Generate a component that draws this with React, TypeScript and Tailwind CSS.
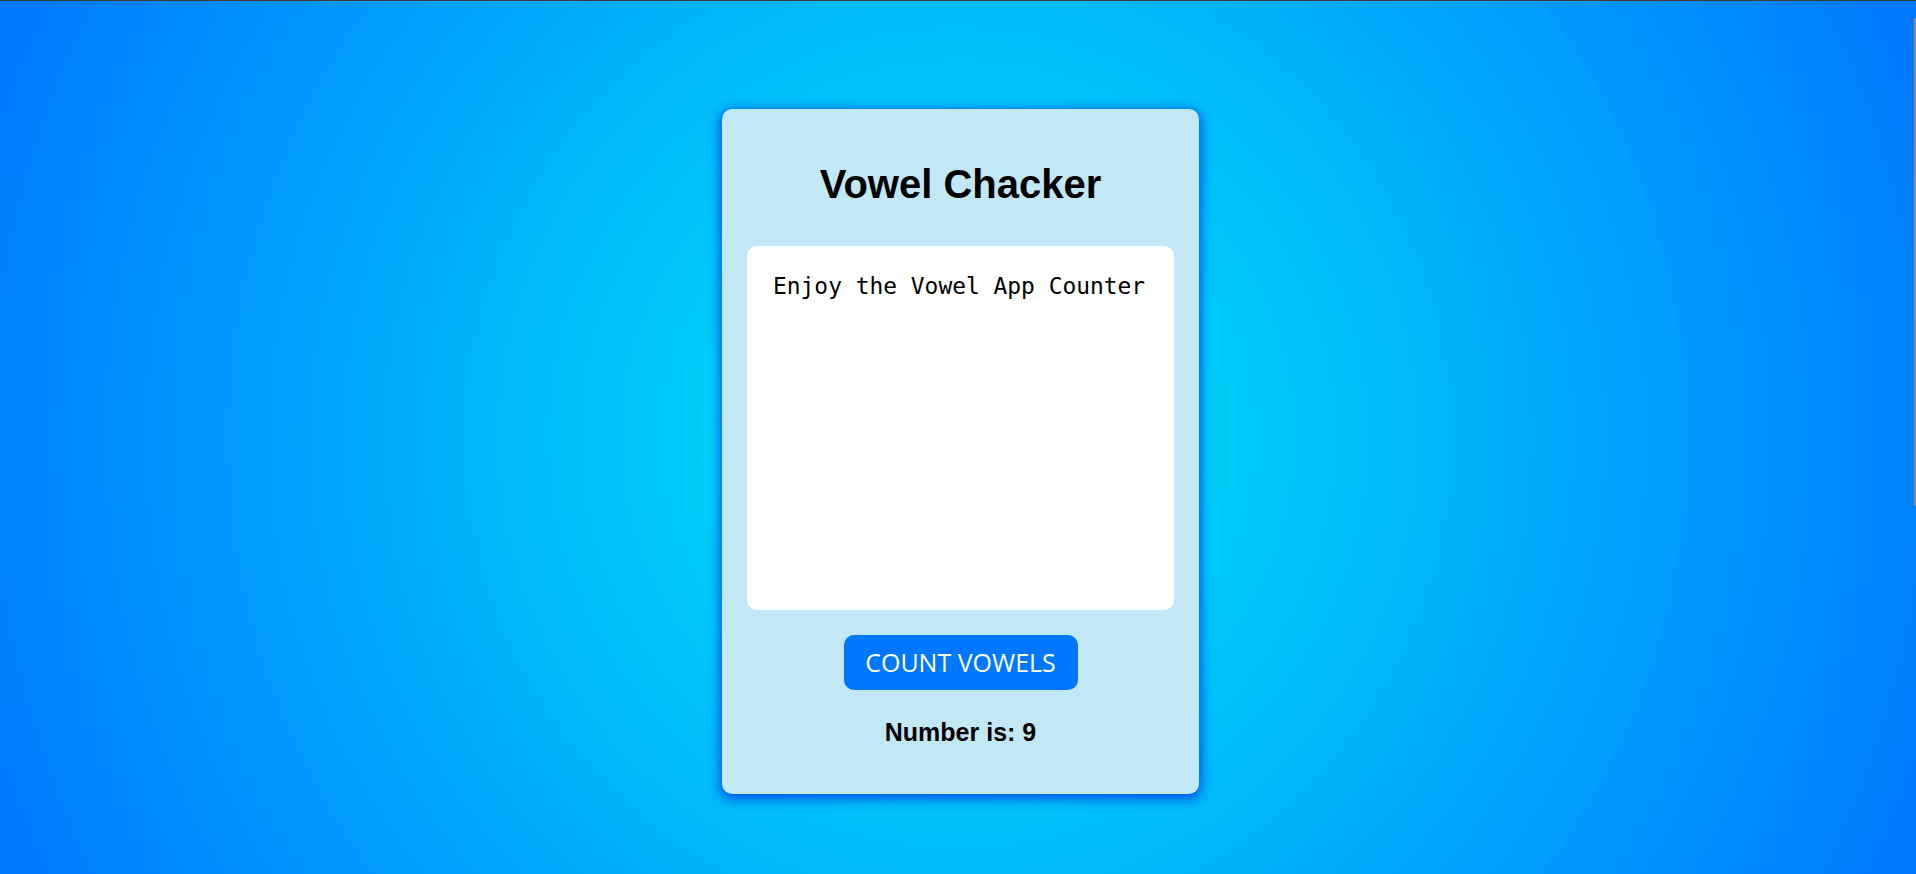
import { useState } from 'react'

const VOWELS = 'aeiouAEIOU'

function countVowels(text: string): number {
  let n = 0
  for (const ch of text) if (VOWELS.includes(ch)) n++
  return n
}

export default function App() {
  const [text, setText] = useState('Enjoy the Vowel App Counter')
  const [count, setCount] = useState(9)

  return (
    <div className="relative min-h-[874px] border-t border-[#3c3c3c] bg-[image:radial-gradient(circle,#00eaf6,#0077ff)] pl-[5px] pt-[108px]">
      <div className="mx-auto flex w-[477px] flex-col items-center rounded-[10px] bg-[#c2e7f5] px-[25px] pt-[52px] pb-[48px] shadow-[0_3px_12px_2px_rgba(0,70,230,0.9)]">
        <h1 className="font-['Liberation_Sans',Arial,sans-serif] text-[40px] leading-[46px] font-bold text-black">
          Vowel Chacker
        </h1>

        <textarea
          className="mt-[39px] h-[364px] w-full resize-none rounded-[10px] border-0 bg-white pr-[20px] pl-[26px] pt-[27px] font-['DejaVu_Sans_Mono',monospace] text-[22.9px] leading-[27px] text-black outline-none"
          value={text}
          onChange={(e) => setText(e.target.value)}
        />

        <button
          className="mt-[25px] flex h-[55px] w-[234px] items-center justify-center rounded-[10px] bg-[#0077ff] font-['Open_Sans',sans-serif] text-[25px] text-white"
          onClick={() => setCount(countVowels(text))}
        >
          COUNT VOWELS
        </button>

        <p className="mt-[28px] font-['Liberation_Sans',Arial,sans-serif] text-[25px] leading-[28px] font-bold text-black">
          Number is: {count}
        </p>
      </div>

      <div className="absolute top-[17px] right-0 h-[488px] w-[2px] bg-[#8a8a8a]" />
    </div>
  )
}
